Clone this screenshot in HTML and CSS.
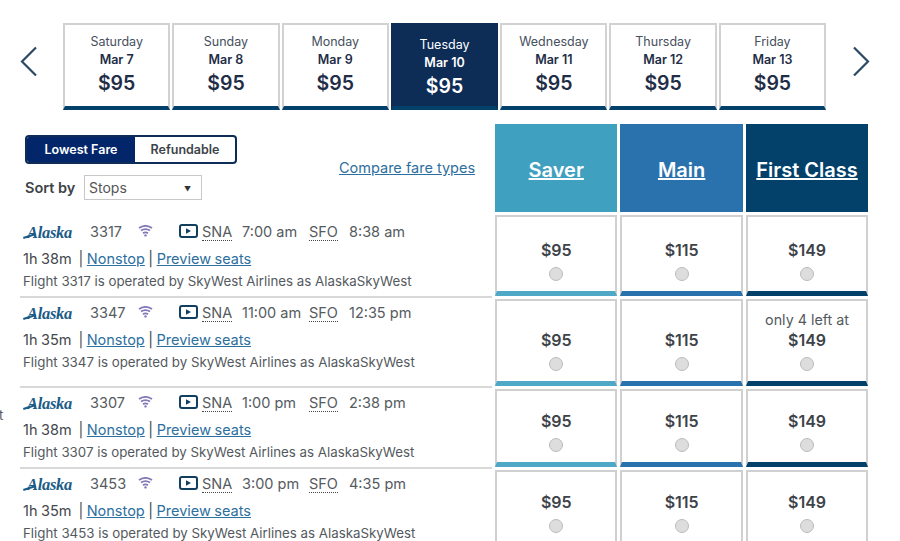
FILE: index.html
```html
<!DOCTYPE html>
<html lang="en">
<head>
    <meta charset="UTF-8">
    <title>Select flights</title>
    <link rel="stylesheet" href="styles.css">
</head>
<body>
    <span class="stray">t</span>

    <!-- Date strip -->
    <div class="date-strip">
        <svg class="arrow" width="18" height="30" viewBox="0 0 18 30"><path d="M16 1.500 2 15.500l14 14"/></svg>
        <div class="date-tabs">
            <div class="date-tab"><span class="day">Saturday</span><span class="date">Mar 7</span><span class="price">$95</span></div>
            <div class="date-tab"><span class="day">Sunday</span><span class="date">Mar 8</span><span class="price">$95</span></div>
            <div class="date-tab"><span class="day">Monday</span><span class="date">Mar 9</span><span class="price">$95</span></div>
            <div class="date-tab selected"><span class="day">Tuesday</span><span class="date">Mar 10</span><span class="price">$95</span></div>
            <div class="date-tab"><span class="day">Wednesday</span><span class="date">Mar 11</span><span class="price">$95</span></div>
            <div class="date-tab"><span class="day">Thursday</span><span class="date">Mar 12</span><span class="price">$95</span></div>
            <div class="date-tab"><span class="day">Friday</span><span class="date">Mar 13</span><span class="price">$95</span></div>
        </div>
        <svg class="arrow" width="18" height="30" viewBox="0 0 18 30"><path d="M2 1.500l14 14-14 14"/></svg>
    </div>

    <!-- Fare table -->
    <div class="fare-table">
        <div class="controls">
            <div class="toggle">
                <span class="toggle-item active">Lowest Fare</span>
                <span class="toggle-item">Refundable</span>
            </div>
            <div class="sort-row">
                <span class="sort-label">Sort by</span>
                <div class="sort-select"><span>Stops</span><span class="caret">▼</span></div>
                <a href="#" class="compare">Compare fare types</a>
            </div>
        </div>
        <a href="#" class="fare-head saver">Saver</a>
        <a href="#" class="fare-head main">Main</a>
        <a href="#" class="fare-head first">First Class</a>

        <!-- 3317 -->
        <div class="flight first-flight">
            <div class="flight-top">
                <span class="logo">Alaska</span>
                <span class="number">3317</span>
                <svg class="wifi" width="15" height="12" viewBox="0 0 15 12"><path d="M1 3c4-2.600 9-2.600 13 0M3 5.600c3-2 6-2 9 0M5 8.200c1.700-1.100 3.300-1.100 5 0"/><circle cx="7.500" cy="10.400" r="1.200"/></svg>
                <svg class="video" width="19" height="14" viewBox="0 0 19 14"><rect x="1" y="1" width="17" height="12" rx="2"/><path class="play" d="M7 4.200v5.600l5-2.800z"/></svg>
                <span class="airport-cell"><span class="airport">SNA</span></span><span class="time">7:00 am</span>
                <span class="airport-cell to"><span class="airport">SFO</span></span><span class="time">8:38 am</span>
            </div>
            <div class="flight-links">1h 38m &nbsp;| <a href="#">Nonstop</a> | <a href="#">Preview seats</a></div>
            <div class="flight-note">Flight 3317 is operated by SkyWest Airlines as AlaskaSkyWest</div>
        </div>
        <div class="fare-cell saver-cell"><span class="amount">$95</span><input type="radio" name="f1"></div>
        <div class="fare-cell main-cell"><span class="amount">$115</span><input type="radio" name="f1"></div>
        <div class="fare-cell first-cell"><span class="amount">$149</span><input type="radio" name="f1"></div>

        <!-- 3347 -->
        <div class="flight">
            <div class="flight-top">
                <span class="logo">Alaska</span>
                <span class="number">3347</span>
                <svg class="wifi" width="15" height="12" viewBox="0 0 15 12"><path d="M1 3c4-2.600 9-2.600 13 0M3 5.600c3-2 6-2 9 0M5 8.200c1.700-1.100 3.300-1.100 5 0"/><circle cx="7.500" cy="10.400" r="1.200"/></svg>
                <svg class="video" width="19" height="14" viewBox="0 0 19 14"><rect x="1" y="1" width="17" height="12" rx="2"/><path class="play" d="M7 4.200v5.600l5-2.800z"/></svg>
                <span class="airport-cell"><span class="airport">SNA</span></span><span class="time">11:00 am</span>
                <span class="airport-cell to"><span class="airport">SFO</span></span><span class="time">12:35 pm</span>
            </div>
            <div class="flight-links">1h 35m &nbsp;| <a href="#">Nonstop</a> | <a href="#">Preview seats</a></div>
            <div class="flight-note">Flight 3347 is operated by SkyWest Airlines as AlaskaSkyWest</div>
        </div>
        <div class="fare-cell saver-cell"><span class="amount">$95</span><input type="radio" name="f2"></div>
        <div class="fare-cell main-cell"><span class="amount">$115</span><input type="radio" name="f2"></div>
        <div class="fare-cell first-cell"><span class="left-note">only 4 left at</span><span class="amount">$149</span><input type="radio" name="f2"></div>

        <!-- 3307 -->
        <div class="flight">
            <div class="flight-top">
                <span class="logo">Alaska</span>
                <span class="number">3307</span>
                <svg class="wifi" width="15" height="12" viewBox="0 0 15 12"><path d="M1 3c4-2.600 9-2.600 13 0M3 5.600c3-2 6-2 9 0M5 8.200c1.700-1.100 3.300-1.100 5 0"/><circle cx="7.500" cy="10.400" r="1.200"/></svg>
                <svg class="video" width="19" height="14" viewBox="0 0 19 14"><rect x="1" y="1" width="17" height="12" rx="2"/><path class="play" d="M7 4.200v5.600l5-2.800z"/></svg>
                <span class="airport-cell"><span class="airport">SNA</span></span><span class="time">1:00 pm</span>
                <span class="airport-cell to"><span class="airport">SFO</span></span><span class="time">2:38 pm</span>
            </div>
            <div class="flight-links">1h 38m &nbsp;| <a href="#">Nonstop</a> | <a href="#">Preview seats</a></div>
            <div class="flight-note">Flight 3307 is operated by SkyWest Airlines as AlaskaSkyWest</div>
        </div>
        <div class="fare-cell saver-cell"><span class="amount">$95</span><input type="radio" name="f3"></div>
        <div class="fare-cell main-cell"><span class="amount">$115</span><input type="radio" name="f3"></div>
        <div class="fare-cell first-cell"><span class="amount">$149</span><input type="radio" name="f3"></div>

        <!-- 3453 -->
        <div class="flight last-flight">
            <div class="flight-top">
                <span class="logo">Alaska</span>
                <span class="number">3453</span>
                <svg class="wifi" width="15" height="12" viewBox="0 0 15 12"><path d="M1 3c4-2.600 9-2.600 13 0M3 5.600c3-2 6-2 9 0M5 8.200c1.700-1.100 3.300-1.100 5 0"/><circle cx="7.500" cy="10.400" r="1.200"/></svg>
                <svg class="video" width="19" height="14" viewBox="0 0 19 14"><rect x="1" y="1" width="17" height="12" rx="2"/><path class="play" d="M7 4.200v5.600l5-2.800z"/></svg>
                <span class="airport-cell"><span class="airport">SNA</span></span><span class="time">3:00 pm</span>
                <span class="airport-cell to"><span class="airport">SFO</span></span><span class="time">4:35 pm</span>
            </div>
            <div class="flight-links">1h 35m &nbsp;| <a href="#">Nonstop</a> | <a href="#">Preview seats</a></div>
            <div class="flight-note">Flight 3453 is operated by SkyWest Airlines as AlaskaSkyWest</div>
        </div>
        <div class="fare-cell saver-cell"><span class="amount">$95</span><input type="radio" name="f4"></div>
        <div class="fare-cell main-cell"><span class="amount">$115</span><input type="radio" name="f4"></div>
        <div class="fare-cell first-cell"><span class="amount">$149</span><input type="radio" name="f4"></div>
    </div>
</body>
</html>
```

FILE: styles.css
```css
* {
    margin: 0;
    padding: 0;
    box-sizing: border-box;
}

html, body {
    height: 541px;
    overflow: hidden;
}

body {
    position: relative;
    background: #fff;
    color: #3d4349;
    font-family: Inter, "Open Sans", Arial, sans-serif;
}

a {
    color: #2d6f9e;
}

.stray {
    position: absolute;
    left: -1px;
    top: 407px;
    font-size: 13px;
    color: #555;
}

/* Date strip */
.date-strip {
    display: flex;
    align-items: center;
    padding: 23px 0 0 20px;
    height: 110px;
}

.arrow {
    flex: none;
    margin-top: -11px;
}

.arrow path {
    fill: none;
    stroke: #2c4a66;
    stroke-width: 2.200;
}

.date-tabs {
    display: flex;
    gap: 2px;
    margin: 0 26px 0 25px;
}

.date-tab {
    width: 107.300px;
    height: 87px;
    display: flex;
    flex-direction: column;
    align-items: center;
    padding-top: 8px;
    background: #fff;
    border: 2px solid #d2d2d2;
    border-bottom: 4px solid #03416b;
    color: #1f2d47;
}

.date-tab .day {
    font-size: 12.500px;
    line-height: 17px;
    color: #46505e;
}

.date-tab .date {
    font-size: 12.500px;
    line-height: 19px;
    font-weight: 600;
}

.date-tab .price {
    font-size: 19.500px;
    line-height: 28px;
    font-weight: 600;
}

.date-tab.selected {
    padding-top: 11px;
    background: #0d2c56;
    border-color: #0d2c56;
    border-bottom-color: #03416b;
    color: #fff;
}

.date-tab.selected .day {
    color: #fff;
}

/* Fare table */
.fare-table {
    display: grid;
    grid-template-columns: 492px 122.300px 122.300px 122.300px;
    grid-template-rows: 88px 81px 87px 78px 78px;
    column-gap: 3.100px;
    row-gap: 3px;
    margin-top: 14px;
}

.controls {
    padding: 11px 0 0 25px;
}

.toggle {
    display: flex;
    width: 212px;
    height: 29px;
    border: 2px solid #0d2c56;
    border-radius: 4px;
    overflow: hidden;
    font-size: 12.500px;
    font-weight: 600;
}

.toggle-item {
    flex: 1;
    display: flex;
    align-items: center;
    justify-content: center;
}

.toggle-item.active {
    flex: none;
    width: 108px;
    background: #03266a;
    color: #fff;
}

.sort-row {
    display: flex;
    align-items: center;
    margin-top: 11px;
    position: relative;
}

.sort-label {
    width: 59px;
    font-size: 14.500px;
    font-weight: 600;
}

.sort-select {
    display: flex;
    align-items: center;
    justify-content: space-between;
    width: 118px;
    height: 25px;
    padding: 0 10px 0 4px;
    border: 1px solid #c8c8c8;
    font-size: 14px;
    color: #555;
}

.caret {
    font-size: 7px;
    padding-top: 3px;
    color: #333;
}

.compare {
    position: absolute;
    left: 314px;
    top: -16px;
    font-size: 14.500px;
}

.fare-head {
    display: flex;
    align-items: center;
    justify-content: center;
    padding-top: 4px;
    color: #fff;
    font-size: 20px;
    font-weight: 600;
}

.saver { background: #3fa0bf; }
.main { background: #2a72ad; }
.first { background: #03416b; }

/* Flight rows */
.flight {
    margin: 0 0 -2px 20px;
    padding: 4px 0 0 3px;
    border-bottom: 2px solid #d8d8d8;
}

.first-flight {
    padding-top: 7px;
}

.last-flight {
    border-bottom: none;
}

.flight-top {
    display: flex;
    align-items: center;
    height: 18px;
    font-size: 14.500px;
    color: #555b60;
}

.logo {
    position: relative;
    flex: none;
    width: 67px;
    padding: 3px 0 0 4px;
    font-family: "Liberation Serif", serif;
    font-style: italic;
    font-size: 16.500px;
    font-weight: 700;
    letter-spacing: -0.300px;
    color: #1b5b88;
}

.logo::before {
    content: "";
    position: absolute;
    left: 0;
    top: 15px;
    width: 13px;
    height: 2px;
    background: #1b5b88;
    transform: rotate(-18deg);
}

.number {
    flex: none;
    width: 48px;
}

.wifi {
    flex: none;
    margin-right: 26px;
}

.wifi path {
    fill: none;
    stroke: #8179b8;
    stroke-width: 1.800;
}

.wifi circle {
    fill: #8179b8;
}

.video {
    flex: none;
    margin-right: 4px;
}

.video rect {
    fill: none;
    stroke: #123f5f;
    stroke-width: 2;
}

.video .play {
    fill: #123f5f;
}

.airport-cell {
    flex: none;
    width: 40px;
}

.airport {
    border-bottom: 1px dotted #444;
}

.time {
    flex: none;
    width: 67px;
}

.flight-links {
    margin-top: 10px;
    font-size: 14.500px;
    line-height: 18px;
    word-spacing: -0.600px;
    color: #43484d;
}

.flight-note {
    margin-top: 5px;
    font-size: 13.300px;
    line-height: 17px;
    color: #54595e;
}

/* Fare cells */
.fare-cell {
    display: flex;
    flex-direction: column;
    align-items: center;
    justify-content: flex-end;
    padding-bottom: 10px;
    background: #fff;
    border: 1px solid #d0d0d0;
    border-width: 2px 2px 5px;
}

.saver-cell { border-bottom-color: #4fa8c6; }
.main-cell { border-bottom-color: #2a72ad; }
.first-cell { border-bottom-color: #03416b; }

.amount {
    font-size: 16px;
    line-height: 22px;
    font-weight: 600;
    color: #3d4349;
}

.left-note {
    font-size: 14.300px;
    line-height: 18px;
    color: #54595e;
}

.fare-cell input {
    appearance: none;
    width: 14px;
    height: 14px;
    margin-top: 6px;
    background: #ddd;
    border: 1px solid #bcbcbc;
    border-radius: 50%;
}
```
